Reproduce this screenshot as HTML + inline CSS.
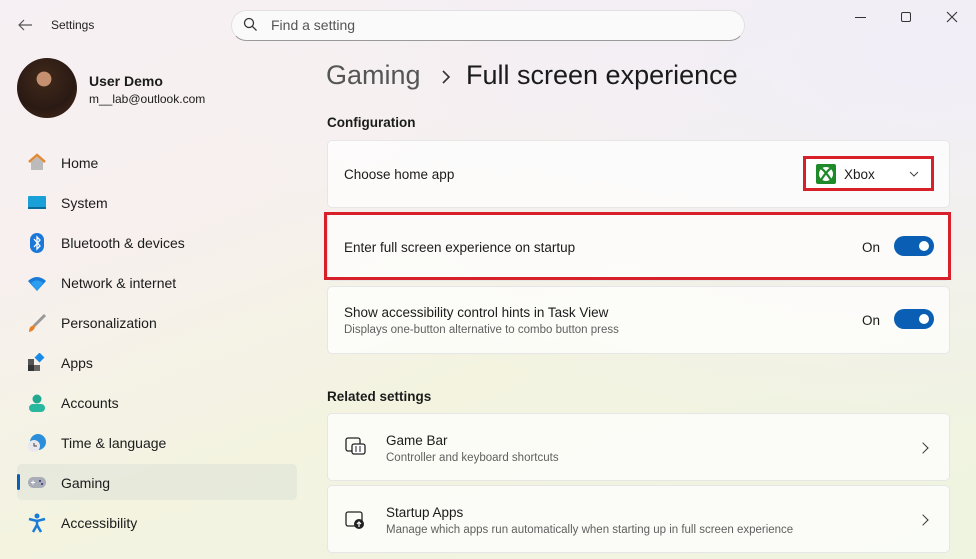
<!DOCTYPE html>
<html><head><style>
*{margin:0;padding:0;box-sizing:border-box}
body{width:976px;height:559px;overflow:hidden;font-family:"Liberation Sans",sans-serif;color:#1b1b1b;position:relative;
background:linear-gradient(160deg,#f6f0f4 0%,#f7f0ee 30%,#f3f3e0 60%,#eef4e0 100%);}
.bg2{position:absolute;inset:0;background:radial-gradient(ellipse at 95% 10%,#f1eef8 0%,rgba(241,238,248,0) 55%)}
.abs{position:absolute}
.nav{position:absolute;left:61px;font-size:14px;color:#1b1b1b}
.ic{position:absolute;left:27px;width:20px;height:20px}
.card{position:absolute;left:327px;width:623px;background:rgba(255,255,255,.72);border:1px solid #e6e6e6;border-radius:5px}
.t{position:absolute;font-size:13.5px}
.s{position:absolute;font-size:11.5px;color:#606060}
.tog{position:absolute;width:40px;height:20px;border-radius:10px;background:#0a5fb4}
.tog:after{content:"";position:absolute;right:5px;top:5px;width:10px;height:10px;border-radius:50%;background:#fff}
.chev{position:absolute;width:8px;height:8px;border-right:1.5px solid #333;border-top:1.5px solid #333;transform:rotate(45deg)}
</style></head><body>
<div class="bg2"></div>
<svg class="abs" style="left:17px;top:18px" width="16" height="14"><path d="M15 7H2M7 2L2 7l5 5" stroke="#555" stroke-width="1.2" fill="none"/></svg>
<div class="abs" style="left:51px;top:18px;font-size:12px;color:#222">Settings</div>
<div class="abs" style="left:231px;top:10px;width:514px;height:31px;border-radius:16px;background:#fbfafb;border:1px solid #e2e0e2;border-bottom-color:#9a9a9a"></div>
<svg class="abs" style="left:243px;top:17px" width="15" height="15"><circle cx="6" cy="6" r="4.5" stroke="#333" stroke-width="1.3" fill="none"/><path d="M9.5 9.5L13.5 13.5" stroke="#333" stroke-width="1.3"/></svg>
<div class="abs" style="left:271px;top:17px;font-size:14px;color:#555">Find a setting</div>
<div class="abs" style="left:855px;top:17px;width:11px;border-top:1px solid #333"></div>
<div class="abs" style="left:901px;top:12px;width:10px;height:10px;border:1px solid #333;border-radius:2px"></div>
<svg class="abs" style="left:946px;top:11px" width="12" height="12"><path d="M1 1L11 11M11 1L1 11" stroke="#333" stroke-width="1.1"/></svg>
<div class="abs" style="left:17px;top:58px;width:60px;height:60px;border-radius:50%;background:radial-gradient(circle at 45% 35%,#c49070 0 14%,#3b2518 15%,#2a1a14 60%,#4a2a1a)"></div>
<div class="abs" style="left:89px;top:73px;font-size:14px;font-weight:bold">User Demo</div>
<div class="abs" style="left:89px;top:92px;font-size:12px">m__lab@outlook.com</div>

<svg class="ic" style="top:152px" viewBox="0 0 20 20"><path d="M2 10L10 3l8 7" stroke="#e08a3a" stroke-width="2.5" fill="none"/><path d="M4 10v8h12v-8L10 5z" fill="#bbb"/></svg>
<div class="nav" style="top:155px">Home</div>
<svg class="ic" style="top:193px" viewBox="0 0 20 20"><rect x="1" y="3" width="18" height="13" rx="1" fill="#1aa0d8"/><rect x="1" y="14" width="18" height="2" fill="#0a6a9a"/></svg>
<div class="nav" style="top:195px">System</div>
<svg class="ic" style="top:233px" viewBox="0 0 20 20"><rect x="3" y="0" width="14" height="20" rx="7" fill="#1a78d8"/><path d="M7 6l6 7-3 3V4l3 3-6 7" stroke="#fff" stroke-width="1.3" fill="none"/></svg>
<div class="nav" style="top:235px">Bluetooth &amp; devices</div>
<svg class="ic" style="top:273px" viewBox="0 0 20 20"><path d="M1 8Q10 0 19 8L10 18z" fill="#1a7ad8"/><path d="M4 10Q10 5 16 10L10 18z" fill="#2a9ef0"/></svg>
<div class="nav" style="top:275px">Network &amp; internet</div>
<svg class="ic" style="top:313px" viewBox="0 0 20 20"><path d="M18 2L7 13" stroke="#999" stroke-width="3"/><path d="M7 12Q2 13 2 19Q7 18 8 14z" fill="#e8822a"/></svg>
<div class="nav" style="top:315px">Personalization</div>
<svg class="ic" style="top:353px" viewBox="0 0 20 20"><rect x="1" y="6" width="6" height="6" fill="#555"/><rect x="1" y="12" width="6" height="6" fill="#333"/><rect x="7" y="12" width="6" height="6" fill="#666"/><rect x="9" y="1" width="7" height="7" fill="#1a8ae8" transform="rotate(45 12.5 4.5)"/></svg>
<div class="nav" style="top:355px">Apps</div>
<svg class="ic" style="top:393px" viewBox="0 0 20 20"><circle cx="10" cy="6" r="4.5" fill="#20a890"/><rect x="2" y="11" width="16" height="8" rx="4" fill="#28b8a0"/></svg>
<div class="nav" style="top:395px">Accounts</div>
<svg class="ic" style="top:433px" viewBox="0 0 20 20"><circle cx="11" cy="9" r="8" fill="#2a8ed8"/><circle cx="7" cy="13" r="6" fill="#e8e8ee"/><path d="M7 10v3h3" stroke="#444" stroke-width="1" fill="none"/></svg>
<div class="nav" style="top:435px">Time &amp; language</div>
<div class="abs" style="left:17px;top:464px;width:280px;height:36px;background:rgba(220,225,215,.55);border-radius:5px"></div>
<div class="abs" style="left:17px;top:474px;width:3px;height:16px;background:#0a5fb4;border-radius:2px"></div>
<svg class="ic" style="top:473px" viewBox="0 0 20 20"><rect x="1" y="4" width="18" height="11" rx="5.5" fill="#a8adb8"/><path d="M4 9.5h4M6 7.5v4" stroke="#fff" stroke-width="1"/><circle cx="13" cy="8" r="1" fill="#337"/><circle cx="15" cy="11" r="1" fill="#337"/></svg>
<div class="nav" style="top:475px">Gaming</div>
<svg class="ic" style="top:513px" viewBox="0 0 20 20"><circle cx="10" cy="3" r="2.5" fill="#1a7ad8"/><path d="M2 6l8 2 8-2M10 8v4l-4 7M10 12l4 7" stroke="#1a7ad8" stroke-width="2.5" fill="none"/></svg>
<div class="nav" style="top:515px">Accessibility</div>

<div class="abs" style="left:326px;top:60px;font-size:27px;color:#555">Gaming</div>
<svg class="abs" style="left:441px;top:70px" width="10" height="14"><path d="M2 1l6 6-6 6" stroke="#333" stroke-width="1.6" fill="none"/></svg>
<div class="abs" style="left:466px;top:60px;font-size:27px;color:#1b1b1b">Full screen experience</div>
<div class="abs" style="left:327px;top:115px;font-size:13.5px;font-weight:bold">Configuration</div>

<div class="card" style="top:140px;height:68px"></div>
<div class="t" style="left:344px;top:167px">Choose home app</div>
<div class="abs" style="left:803px;top:156px;width:131px;height:35px;border:3px solid #d8202a;background:#fff"></div>
<svg class="abs" style="left:816px;top:164px" width="20" height="20" viewBox="0 0 20 20"><rect width="20" height="20" rx="2" fill="#1e8a2a"/><circle cx="10" cy="10" r="7" fill="#fff"/><path d="M5 4Q10 8 15 16M15 4Q10 8 5 16" stroke="#1e8a2a" stroke-width="2.2" fill="none"/></svg>
<div class="t" style="left:844px;top:167px">Xbox</div>
<svg class="abs" style="left:909px;top:171px" width="10" height="6"><path d="M1 1l4 4 4-4" stroke="#444" stroke-width="1" fill="none"/></svg>

<div class="card" style="top:213px;height:68px"></div>
<div class="abs" style="left:324px;top:212px;width:627px;height:68px;border:3px solid #d8202a"></div>
<div class="t" style="left:344px;top:240px">Enter full screen experience on startup</div>
<div class="t" style="left:862px;top:240px">On</div>
<div class="tog" style="left:894px;top:236px"></div>

<div class="card" style="top:286px;height:68px"></div>
<div class="t" style="left:344px;top:305px">Show accessibility control hints in Task View</div>
<div class="s" style="left:344px;top:324px">Displays one-button alternative to combo button press</div>
<div class="t" style="left:862px;top:313px">On</div>
<div class="tog" style="left:894px;top:309px"></div>

<div class="abs" style="left:327px;top:389px;font-size:13.5px;font-weight:bold">Related settings</div>
<div class="card" style="top:413px;height:68px"></div>
<svg class="abs" style="left:345px;top:437px" width="22" height="20" viewBox="0 0 22 20"><rect x="1" y="1" width="14" height="13" rx="2" stroke="#222" stroke-width="1.3" fill="none"/><rect x="7" y="7" width="13" height="10" rx="2" stroke="#222" stroke-width="1.3" fill="#fff"/><path d="M11 9v6M15 9v6" stroke="#222" stroke-width="1"/></svg>
<div class="t" style="left:386px;top:433px">Game Bar</div>
<div class="s" style="left:386px;top:452px">Controller and keyboard shortcuts</div>
<div class="chev" style="left:919px;top:444px"></div>
<div class="card" style="top:485px;height:68px"></div>
<svg class="abs" style="left:345px;top:510px" width="22" height="20" viewBox="0 0 22 20"><rect x="1" y="2" width="16" height="14" rx="2" stroke="#222" stroke-width="1.3" fill="none"/><circle cx="14" cy="14" r="5" fill="#222"/><path d="M14 17v-5M12 14l2-2 2 2" stroke="#fff" stroke-width="1.2" fill="none"/></svg>
<div class="t" style="left:386px;top:505px">Startup Apps</div>
<div class="s" style="left:386px;top:524px">Manage which apps run automatically when starting up in full screen experience</div>
<div class="chev" style="left:919px;top:516px"></div>
</body></html>
